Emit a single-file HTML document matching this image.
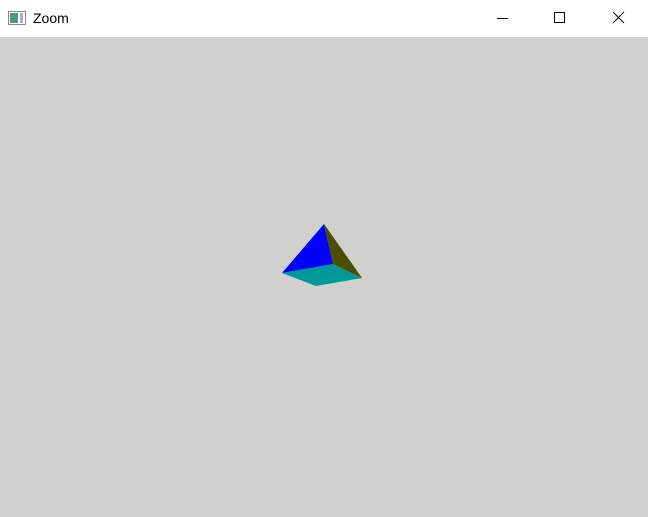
<!DOCTYPE html>
<html><head><style>
html,body{margin:0;padding:0;width:648px;height:517px;overflow:hidden;background:#d0d0cc;font-family:"Liberation Sans",sans-serif}
#bar{position:absolute;left:0;top:0;width:648px;height:37px;background:#fff}
#t{position:absolute;left:33px;top:10px;font-size:14px;color:#000}
</style></head><body>
<div id="bar">
<svg width="648" height="37" style="position:absolute;left:0;top:0">
<rect x="8.5" y="11.5" width="17" height="13" fill="#fff" stroke="#888"/>
<rect x="10" y="13" width="8" height="10" fill="#4a9a80"/>
<rect x="20" y="13" width="3" height="10" fill="#aac"/>
<line x1="497" y1="18.5" x2="508" y2="18.5" stroke="#000"/>
<rect x="554.5" y="12.5" width="10" height="10" fill="none" stroke="#000"/>
<path d="M613 12 L624 23 M624 12 L613 23" stroke="#000"/>
</svg>
<div id="t">Zoom</div>
</div>
<svg width="648" height="517" style="position:absolute;left:0;top:0">
<polygon points="282,273 333,264 362,278 316,286" fill="#009999"/>
<polygon points="324,224 282,273 333,264" fill="#0000ff"/>
<polygon points="324,224 333,264 362,278" fill="#4d4d00"/>
</svg>
</body></html>
